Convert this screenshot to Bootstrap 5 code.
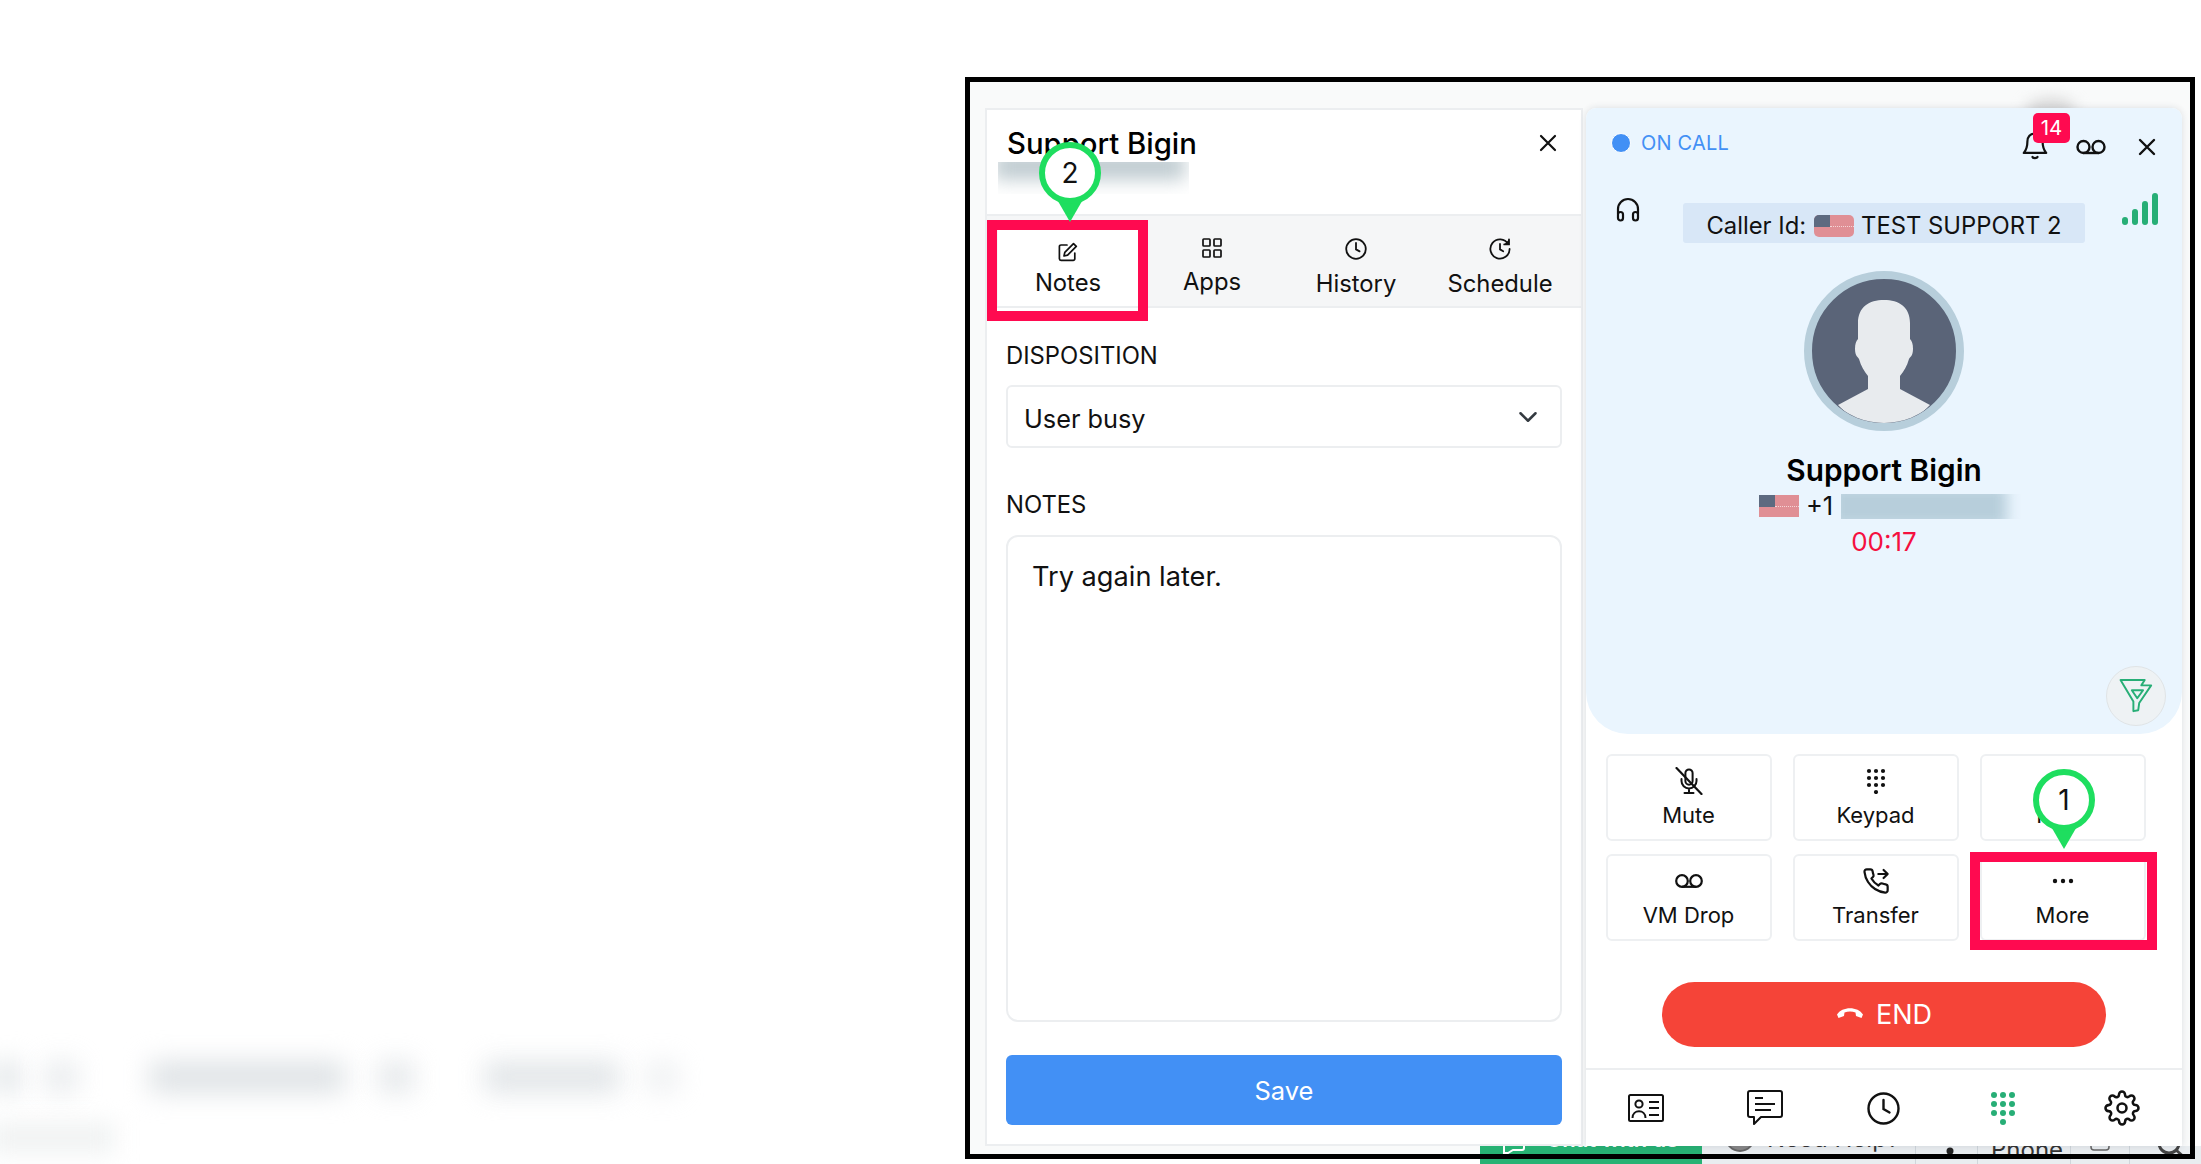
<!DOCTYPE html>
<html lang="en">
<head>
    <meta charset="UTF-8">
    <title>Support Bigin call</title>
    <link rel="stylesheet" href="https://cdn.jsdelivr.net/npm/bootstrap@5.3.2/dist/css/bootstrap.min.css">
    <style>
        body { margin: 0; background: #fff; color: #111; font-family: Inter, "Liberation Sans", sans-serif; }
        svg { display: block; }
        .stage { position: relative; width: 2201px; height: 1164px; overflow: hidden; background: #fff; }
        .stage::before { content: ""; position: absolute; left: 969px; top: 82px; width: 1221px; height: 1072px; background: #f9fafa; }

        /* blurred page behind the widget */
        .ghosts { position: absolute; left: 0; top: 1061px; height: 32px; display: flex; }
        .ghost { display: block; height: 100%; background: #dfe3e6; filter: blur(13px); }
        .ghost-a { width: 24px; margin-left: -5px; }
        .ghost-b { width: 32px; margin-left: 26px; opacity: .7; }
        .ghost-c { width: 196px; margin-left: 72px; }
        .ghost-d { width: 36px; margin-left: 33px; opacity: .8; }
        .ghost-e { width: 136px; margin-left: 70px; opacity: .9; }
        .ghost-f { width: 32px; margin-left: 26px; opacity: .5; }
        .ghost-low { position: absolute; left: -10px; top: 1122px; width: 125px; height: 32px; background: #f1f3f3; filter: blur(11px); }
        .ghost-top { position: absolute; left: 2026px; top: 98px; width: 50px; height: 24px; border-radius: 50%; background: #d8d8d8; filter: blur(7px); }

        .back-strip { position: absolute; left: 1480px; right: 0; top: 1146px; height: 18px; display: flex; background: #e9edf0; font-size: 24px; line-height: 28px; color: #333; overflow: hidden; }
        .back-chat { display: flex; width: 222px; background: #27b274; color: #fff; font-size: 22px; font-weight: 600; padding-left: 23px; }
        .back-chat span { margin: -21px 0 0 21px; }
        .back-cell { display: flex; height: 100%; border-right: 1px solid #cfd6db; white-space: nowrap; }
        .cell-help { width: 214px; padding-left: 23px; }
        .cell-help span { margin: -21px 0 0 12px; }
        .cell-dot { width: 62px; padding-left: 29px; }
        .cell-phone { width: 93px; padding-left: 13px; }
        .cell-phone span { margin-top: -10px; }
        .cell-box { width: 59px; padding-left: 19px; }
        .cell-lens { padding-left: 27px; }

        /* annotated window */
        .shot-frame { position: relative; z-index: 2; margin-left: 965px; top: 77px; width: 1230px; height: 1082px; border: 5px solid #000; padding: 26px 8px 8px 15px; display: flex; gap: 3px; }
        .side-panel { position: relative; width: 598px; background: #fff; border: 2px solid #eceef0; display: flex; flex-direction: column; }
        .side-head { height: 104px; padding: 16px 26px 0 20px; position: relative; }
        .side-title { font-size: 29.3px; line-height: 36px; font-weight: 500; color: #000; }
        .side-close { position: absolute; right: 24px; top: 24px; }
        .smudge { overflow: hidden; position: relative; }
        .smudge-head { width: 191px; height: 32px; margin-left: -9px; }
        .smudge-phone { width: 180px; height: 25px; }
        .smudge i { position: absolute; display: block; }
        .smudge-head i { left: -4px; right: 4px; top: -10px; height: 28px; background: #c0ccd1; filter: blur(9px); }
        .smudge-phone i { left: -10px; right: 14px; top: -8px; bottom: -8px; background: #b7cedb; filter: blur(7px); }

        .tab-band { height: 94px; background: #f5f6f7; border-top: 2px solid #eceef0; border-bottom: 2px solid #eceef0; padding: 0 9px; flex-wrap: nowrap; }
        .tab-item { position: relative; width: 144px; height: 90px; padding: 22px 0 0; display: flex; flex-direction: column; align-items: center; color: #111; font-size: 23.8px; line-height: 28px; }
        .tab-item svg { margin-bottom: 10px; }
        .tab-item:hover { color: #111; }
        .tab-active { width: 140px; height: 76px; margin: 14px 2px 0; background: #fff; padding-top: 12px; }
        .tab-active svg { margin-bottom: 7px; }

        .side-body { padding: 0 19px; }
        .field-label { font-size: 23.8px; line-height: 30px; color: #111; margin: 0; }
        .side-body .form-select, .side-body .form-control { border: 2px solid #eceef0; color: #111; font-family: inherit; box-shadow: none; }
        .side-body .form-select { height: 63px; margin-top: 14px; padding: 4px 60px 0 16px; font-size: 25.3px; border-radius: 6px; background-position: right 19px center; background-size: 26px 20px; }
        .side-body .form-control { height: 487px; margin-top: 15px; padding: 25px 24px; font-size: 27.2px; line-height: 30px; border-radius: 12px; resize: none; }
        .save-btn { display: block; width: 100%; height: 70px; margin-top: 33px; padding-top: 8px; background: #4290f5; border: 0; border-radius: 6px; font-size: 25.5px; color: #fff; }
        .save-btn:hover { background: #4290f5; color: #fff; }

        .call-panel { position: relative; width: 596px; background: #fff; display: flex; flex-direction: column; box-shadow: 0 0 7px rgba(40, 60, 80, .14); border-radius: 10px 10px 0 0; }
        .call-blue { height: 626px; background: #eaf5fe; border-radius: 10px 10px 42px 42px; padding: 5px 26px 8px; display: flex; flex-direction: column; align-items: center; }
        .call-top { width: 100%; height: 60px; }
        .live-dot { width: 20px; height: 20px; border-radius: 50%; background: #4290f5; border: 1px solid #fff; margin: 0 10px 0 -1px; }
        .live-text { color: #4290f5; font-size: 20px; letter-spacing: .2px; }
        .bell-wrap { position: relative; width: 26px; margin: -4px 28px 0 0; }
        .bell-count { position: absolute; left: 11px; top: -18px; width: 37px; height: 30px; border-radius: 5px; background: #ff0a50; color: #fff; font-size: 20.5px; line-height: 30px; text-align: center; }
        .call-second { width: 100%; margin-top: 20px; }
        .head-icon { margin: 4px 0 0 4px; }
        .caller-chip { width: 402px; height: 40px; margin: 10px 0 0 43px; padding-top: 5px; background: #d8e7f7; border-radius: 3px; font-size: 23.8px; color: #111; }
        .flag-us { position: relative; display: inline-block; width: 40px; height: 22px; background: #e08f95; overflow: hidden; flex: none; }
        .flag-us::before { content: ""; position: absolute; left: 0; top: 0; width: 16px; height: 12px; background: #5d6a80; }
        .flag-us::after { content: ""; position: absolute; left: 16px; right: 0; top: 11px; border-top: 1px dotted #f5d5d7; }
        .flag-round { border-radius: 5px; margin: 0 7px 0 8px; }
        .signal-bars { margin-left: auto; margin-right: -2px; }
        .avatar-ring { width: 160px; height: 160px; margin-top: 28px; border-radius: 50%; border: 8px solid #b7cedb; overflow: hidden; background: #5a6478; flex: none; }
        .caller-name { margin-top: 21px; font-size: 29.8px; line-height: 36px; font-weight: 600; color: #000; }
        .phone-line { margin: 3px 0 0 12px; height: 30px; font-size: 25.5px; line-height: 30px; width: 262px; }
        .phone-line span.plus { margin: 0 8px 0 7px; }
        .call-timer { margin-top: 6px; font-size: 26px; line-height: 30px; color: #f5103f; }
        .funnel-btn { margin-top: auto; margin-right: -10px; align-self: flex-end; width: 60px; height: 60px; border-radius: 50%; background: #eef2f4; border: 1px solid #e0e4e6; }

        .action-grid { display: grid; grid-template-columns: repeat(3, 166px); grid-auto-rows: 87px; column-gap: 21px; row-gap: 13px; padding: 20px 0 0 19.5px; }
        .action-btn { position: relative; display: flex; flex-direction: column; align-items: center; justify-content: flex-end; padding: 0 0 10px; background: #fff; border: 2px solid #eef0f2; border-radius: 6px; font-size: 22px; line-height: 28px; color: #111; }
        .action-btn:hover { background: #fff; color: #111; border-color: #eef0f2; }
        .action-btn svg { margin-bottom: 6px; }
        .action-btn svg.mb-keypad { margin-bottom: 7px; }
        .action-btn svg.mb-vm { margin-bottom: 13px; }
        .action-btn svg.mb-more { margin-bottom: 17px; }
        .action-hold { padding-right: 4px; }
        .end-btn { align-self: center; width: 444px; height: 65px; margin-top: 41px; background: #f54438; border: 0; border-radius: 33px; color: #fff; font-size: 27px; }
        .end-btn:hover { background: #f54438; color: #fff; }
        .end-btn span { margin-top: 2px; }
        .end-btn svg { margin-top: -5px; }
        .bottom-nav { margin-top: 21px; border-top: 2px solid #eceef0; height: 78px; }
        .bottom-nav > div { width: 20%; }

        /* annotation marks */
        .mark-ring { position: absolute; border: 10px solid #ff0a50; z-index: 5; pointer-events: none; }
        .ring-tab { left: -11px; right: -10px; top: -10px; bottom: -15px; }
        .ring-more { left: -12px; right: -13px; top: -4px; bottom: -11px; }
        .action-btn svg.mark-pin, .tab-item svg.mark-pin { position: absolute; z-index: 6; margin: 0; }
        .pin-tab { left: 41px; top: -88px; }
        .pin-more { left: 51px; top: -87px; }
        .mark-pin text { font-family: Inter, "Liberation Sans", sans-serif; font-size: 28px; fill: #111; text-anchor: middle; }
    </style>
</head>
<body>
    <div class="stage">
        <div class="ghosts">
            <span class="ghost ghost-a"></span><span class="ghost ghost-b"></span><span class="ghost ghost-c"></span>
            <span class="ghost ghost-d"></span><span class="ghost ghost-e"></span><span class="ghost ghost-f"></span>
        </div>
        <div class="ghost-low"></div>
        <div class="ghost-top"></div>

        <div class="back-strip">
            <div class="back-chat">
                <svg width="22" height="18" viewBox="0 0 22 18" fill="none" stroke="#fff" stroke-width="2"><path d="M21 -4V2a2 2 0 0 1-2 2H10L5 7H1V-4"/></svg>
                <span>Chat with us</span>
            </div>
            <div class="back-cell cell-help">
                <svg width="30" height="18" viewBox="0 0 30 18" fill="#888" stroke="#666" stroke-width="2"><circle cx="15" cy="-9" r="14"/></svg>
                <span>Need Help?</span>
            </div>
            <div class="back-cell cell-dot">
                <svg width="10" height="18" viewBox="0 0 10 18" fill="#222"><circle cx="5" cy="5" r="3.5"/></svg>
            </div>
            <div class="back-cell cell-phone"><span>Phone</span></div>
            <div class="back-cell cell-box">
                <svg width="20" height="18" viewBox="0 0 20 18" fill="none" stroke="#666" stroke-width="1.5"><rect x="1" y="-8" width="18" height="12" rx="3"/></svg>
            </div>
            <div class="cell-lens">
                <svg width="30" height="18" viewBox="0 0 30 18" fill="none" stroke="#444" stroke-width="3"><circle cx="12" cy="-3" r="10"/><path d="M19 4l9 8"/></svg>
            </div>
        </div>

        <div class="shot-frame">
            <!-- left side panel -->
            <div class="side-panel">
                <div class="side-head">
                    <div class="side-title">Support Bigin</div>
                    <div class="smudge smudge-head"><i></i></div>
                    <svg class="side-close" width="18" height="18" viewBox="0 0 18 18" fill="none" stroke="#111" stroke-width="2.2" stroke-linecap="round"><path d="M2 2l14 14M16 2L2 16"/></svg>
                </div>
                <div class="nav tab-band">
                    <a class="nav-link tab-item tab-active" href="#">
                        <svg width="20" height="20" viewBox="0 0 20 20" fill="none" stroke="#111" stroke-width="1.7" stroke-linejoin="round" stroke-linecap="round"><path d="M9 3H3a1.6 1.6 0 0 0-1.6 1.6v12.2A1.6 1.6 0 0 0 3 18.400h12.200a1.6 1.6 0 0 0 1.6-1.6V11"/><path d="M15.5 1.6l2.8 2.8L9.6 13.200l-3.6.8.8-3.6z"/></svg>
                        Notes
                        <span class="mark-ring ring-tab"></span>
                        <svg class="mark-pin pin-tab" width="62" height="80" viewBox="0 0 62 80"><path d="M16 54h30L31 80z" fill="#1ede5f"/><circle cx="31" cy="31" r="28" fill="#fff" stroke="#1ede5f" stroke-width="6"/><text x="31" y="41">2</text></svg>
                    </a>
                    <a class="nav-link tab-item" href="#">
                        <svg width="20" height="20" viewBox="0 0 20 20" fill="none" stroke="#111" stroke-width="1.7"><rect x="1" y="1" width="7" height="7" rx=".8"/><rect x="12" y="1" width="7" height="7" rx=".8"/><rect x="1" y="12" width="7" height="7" rx=".8"/><rect x="12" y="12" width="7" height="7" rx=".8"/></svg>
                        Apps
                    </a>
                    <a class="nav-link tab-item" href="#">
                        <svg width="22" height="22" viewBox="0 0 22 22" fill="none" stroke="#111" stroke-width="1.8" stroke-linecap="round"><circle cx="11" cy="11" r="9.8"/><path d="M11 5v6.4l3.6 2"/></svg>
                        History
                    </a>
                    <a class="nav-link tab-item" href="#">
                        <svg width="22" height="22" viewBox="0 0 22 22" fill="none" stroke="#111" stroke-width="1.8" stroke-linecap="round"><path d="M19.2 6A9.6 9.6 0 1 0 20.6 11"/><path d="M20 1.5V6.4h-4.8" fill="#111"/><path d="M11 6v5.4l3.2 1.8"/></svg>
                        Schedule
                    </a>
                </div>
                <div class="side-body">
                    <p class="field-label" style="margin-top:33px">DISPOSITION</p>
                    <select class="form-select">
                        <option>User busy</option>
                    </select>
                    <p class="field-label" style="margin-top:42px">NOTES</p>
                    <textarea class="form-control">Try again later.</textarea>
                    <button class="btn save-btn">Save</button>
                </div>
            </div>

            <!-- call panel -->
            <div class="call-panel">
                <div class="call-blue">
                    <div class="call-top d-flex align-items-center">
                        <span class="live-dot"></span>
                        <span class="live-text">ON CALL</span>
                        <div class="ms-auto d-flex align-items-center" style="margin-top:8px">
                            <div class="bell-wrap">
                                <svg width="26" height="29" viewBox="0 0 26 29" fill="none" stroke="#111" stroke-width="2.2" stroke-linecap="round" stroke-linejoin="round"><path d="M13 2.5c-4.8 0-7.6 3.6-7.6 8 0 6-1.6 9-3.6 11.4h22.400C22.200 19.500 20.600 16.500 20.600 10.500c0-4.400-2.800-8-7.600-8z"/><path d="M10.500 26c.6 1.500 4.400 1.500 5 0"/></svg>
                                <span class="bell-count">14</span>
                            </div>
                            <svg class="me-4" width="30" height="16" viewBox="0 0 30 16" fill="none" stroke="#111" stroke-width="2.400"><circle cx="7.500" cy="8" r="6"/><circle cx="22.500" cy="8" r="6"/><path d="M7.500 14h15"/></svg>
                            <svg class="ms-2" width="18" height="18" viewBox="0 0 18 18" fill="none" stroke="#111" stroke-width="2.400" stroke-linecap="round"><path d="M2 2l14 14M16 2L2 16"/></svg>
                        </div>
                    </div>
                    <div class="call-second d-flex align-items-start">
                        <svg class="head-icon" width="24" height="25" viewBox="0 0 24 25" fill="none" stroke="#111" stroke-width="2.200" stroke-linejoin="round"><path d="M2 17v-5a10 10 0 0 1 20 0v5"/><rect x="2" y="15" width="5" height="8.500" rx="2.500"/><rect x="17" y="15" width="5" height="8.500" rx="2.500"/></svg>
                        <div class="caller-chip d-flex align-items-center justify-content-center">
                            Caller Id:<span class="flag-us flag-round"></span>TEST SUPPORT 2
                        </div>
                        <svg class="signal-bars" width="36" height="32" viewBox="0 0 36 32" fill="#27ae76"><rect x="0" y="24" width="6" height="8" rx="3"/><rect x="10" y="16" width="6" height="16" rx="3"/><rect x="20" y="8" width="6" height="24" rx="3"/><rect x="30" y="0" width="6" height="32" rx="3"/></svg>
                    </div>
                    <div class="avatar-ring">
                        <svg width="144" height="144" viewBox="8 8 144 144"><path fill="#e8ebee" d="M80 29C65 29 54 36 54 52L54 68C52 70 51 73 51 78C51 85 54 86 55 88C57 95 60 100 64 105L64 118L34 134C45 146 60 153 80 153C100 153 115 146 126 134L96 118L96 105C100 100 103 95 105 88C106 86 109 85 109 78C109 73 108 70 106 68L106 52C106 36 95 29 80 29Z"/></svg>
                    </div>
                    <div class="caller-name">Support Bigin</div>
                    <div class="phone-line d-flex align-items-center">
                        <span class="flag-us"></span><span class="plus">+1</span>
                        <div class="smudge smudge-phone"><i></i></div>
                    </div>
                    <div class="call-timer">00:17</div>
                    <div class="funnel-btn d-flex align-items-center justify-content-center">
                        <svg width="60" height="60" viewBox="6 6 60 60" fill="none" stroke="#27ae76" stroke-width="2" stroke-linejoin="round"><path d="M20 19.500H45L41.500 25H51.700L39.300 43.300 38.300 50.700 33.300 51.700V41.700z"/><path d="M31.700 30H43.300L37.300 38.300z"/></svg>
                    </div>
                </div>

                <div class="action-grid">
                    <button class="btn action-btn">
                        <svg width="28" height="28" viewBox="0 0 28 28" fill="none" stroke="#111" stroke-width="2" stroke-linecap="round"><path d="M14 2.500a3.600 3.600 0 0 0-3.600 3.600v8a3.600 3.600 0 0 0 7.200 0v-8A3.600 3.600 0 0 0 14 2.500z"/><path d="M6.500 12v2a7.500 7.500 0 0 0 15 0v-2M14 21.500V26M9.500 26h9"/><path d="M1.500 1l25 26" stroke-width="2.200"/></svg>
                        Mute
                    </button>
                    <button class="btn action-btn">
                        <svg class="mb-keypad" width="20" height="26" viewBox="0 0 20 26" fill="#111"><circle cx="3" cy="3" r="2.100"/><circle cx="10" cy="3" r="2.100"/><circle cx="17" cy="3" r="2.100"/><circle cx="3" cy="10" r="2.100"/><circle cx="10" cy="10" r="2.100"/><circle cx="17" cy="10" r="2.100"/><circle cx="3" cy="17" r="2.100"/><circle cx="10" cy="17" r="2.100"/><circle cx="17" cy="17" r="2.100"/><circle cx="10" cy="24" r="2.100"/></svg>
                        Keypad
                    </button>
                    <button class="btn action-btn action-hold">Hold</button>
                    <button class="btn action-btn">
                        <svg class="mb-vm" width="28" height="14" viewBox="0 0 28 14" fill="none" stroke="#111" stroke-width="2.200"><circle cx="7" cy="7" r="5.800"/><circle cx="21" cy="7" r="5.800"/><path d="M7 12.800h14"/></svg>
                        VM Drop
                    </button>
                    <button class="btn action-btn">
                        <svg width="28" height="28" viewBox="0 0 24 24" fill="none" stroke="#111" stroke-width="1.900" stroke-linecap="round" stroke-linejoin="round"><path d="M22 16.920v3a2 2 0 0 1-2.180 2 19.790 19.790 0 0 1-8.630-3.070 19.500 19.500 0 0 1-6-6 19.790 19.790 0 0 1-3.070-8.670A2 2 0 0 1 4.110 2h3a2 2 0 0 1 2 1.720 12.840 12.840 0 0 0 .7 2.810 2 2 0 0 1-.45 2.110L8.090 9.910a16 16 0 0 0 6 6l1.270-1.270a2 2 0 0 1 2.110-.45 12.840 12.840 0 0 0 2.810.7A2 2 0 0 1 22 16.920z"/><path d="M14 6h8M18.500 2.500L22 6l-3.500 3.500"/></svg>
                        Transfer
                    </button>
                    <button class="btn action-btn">
                        <svg class="mb-more" width="22" height="6" viewBox="0 0 22 6" fill="#111"><circle cx="3" cy="3" r="2.200"/><circle cx="11" cy="3" r="2.200"/><circle cx="19" cy="3" r="2.200"/></svg>
                        More
                        <span class="mark-ring ring-more"></span>
                        <svg class="mark-pin pin-more" width="62" height="80" viewBox="0 0 62 80"><path d="M16 54h30L31 80z" fill="#1ede5f"/><circle cx="31" cy="31" r="28" fill="#fff" stroke="#1ede5f" stroke-width="6"/><text x="31" y="41">1</text></svg>
                    </button>
                </div>

                <button class="btn end-btn d-flex align-items-center justify-content-center gap-2">
                    <svg width="28" height="14" viewBox="0 0 28 14" fill="#fff"><path d="M1 9.500C6 1 22 1 27 9.500L25.500 13l-5.500-2-.5-3.500C16 6 12 6 8.500 7.500L8 11l-5.500 2z"/></svg>
                    <span class="ms-1">END</span>
                </button>

                <div class="bottom-nav d-flex align-items-center">
                    <div class="d-flex justify-content-center">
                        <svg width="36" height="28" viewBox="0 0 36 28" fill="none" stroke="#111" stroke-width="2"><rect x="1" y="1" width="34" height="26" rx="1.500"/><circle cx="11" cy="10" r="3.600"/><path d="M4.500 24c0-9 13-9 13 0M21 8h10M21 14h10M21 21h10"/></svg>
                    </div>
                    <div class="d-flex justify-content-center">
                        <svg width="36" height="36" viewBox="0 0 36 36" fill="none" stroke="#111" stroke-width="2" stroke-linejoin="round"><path d="M3 1h30a2 2 0 0 1 2 2v22a2 2 0 0 1-2 2H14l-7 7v-7H3a2 2 0 0 1-2-2V3a2 2 0 0 1 2-2z"/><path d="M8 8h8M8 14h20M8 20h16"/></svg>
                    </div>
                    <div class="d-flex justify-content-center">
                        <svg width="33" height="33" viewBox="0 0 33 33" fill="none" stroke="#111" stroke-width="2.400" stroke-linecap="round"><circle cx="16.500" cy="16.500" r="15"/><path d="M16.500 8v9l6 3.500"/></svg>
                    </div>
                    <div class="d-flex justify-content-center">
                        <svg width="24" height="33" viewBox="0 0 24 33" fill="#27ae76"><circle cx="3" cy="3" r="3"/><circle cx="12" cy="3" r="3"/><circle cx="21" cy="3" r="3"/><circle cx="3" cy="12" r="3"/><circle cx="12" cy="12" r="3"/><circle cx="21" cy="12" r="3"/><circle cx="3" cy="21" r="3"/><circle cx="12" cy="21" r="3"/><circle cx="21" cy="21" r="3"/><circle cx="12" cy="30" r="3"/></svg>
                    </div>
                    <div class="d-flex justify-content-center">
                        <svg width="36" height="36" viewBox="0 0 24 24" fill="none" stroke="#111" stroke-width="1.700" stroke-linejoin="round"><circle cx="12" cy="12" r="3"/><path d="M19.400 15a1.650 1.650 0 0 0 .33 1.820l.06.06a2 2 0 0 1 0 2.830 2 2 0 0 1-2.830 0l-.06-.06a1.650 1.650 0 0 0-1.820-.33 1.650 1.650 0 0 0-1 1.510V21a2 2 0 0 1-2 2 2 2 0 0 1-2-2v-.09A1.650 1.650 0 0 0 9 19.400a1.650 1.650 0 0 0-1.820.33l-.06.06a2 2 0 0 1-2.830 0 2 2 0 0 1 0-2.830l.06-.06a1.650 1.650 0 0 0 .33-1.820 1.650 1.650 0 0 0-1.510-1H3a2 2 0 0 1-2-2 2 2 0 0 1 2-2h.09A1.650 1.650 0 0 0 4.600 9a1.650 1.650 0 0 0-.33-1.820l-.06-.06a2 2 0 0 1 0-2.830 2 2 0 0 1 2.830 0l.06.06a1.650 1.650 0 0 0 1.820.33H9a1.650 1.650 0 0 0 1-1.510V3a2 2 0 0 1 2-2 2 2 0 0 1 2 2v.09a1.650 1.650 0 0 0 1 1.510 1.650 1.650 0 0 0 1.820-.33l.06-.06a2 2 0 0 1 2.830 0 2 2 0 0 1 0 2.830l-.06.06a1.650 1.650 0 0 0-.33 1.820V9a1.650 1.650 0 0 0 1.510 1H21a2 2 0 0 1 2 2 2 2 0 0 1-2 2h-.09a1.650 1.650 0 0 0-1.510 1z"/></svg>
                    </div>
                </div>
            </div>
        </div>
    </div>
    <script src="https://cdn.jsdelivr.net/npm/bootstrap@5.3.2/dist/js/bootstrap.bundle.min.js"></script>
</body>
</html>
